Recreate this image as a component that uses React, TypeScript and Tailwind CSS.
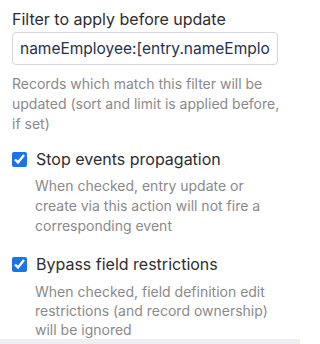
export default function App() {
  const font = { fontFamily: 'Inter, "Noto Sans", sans-serif' };
  return (
    <div className="w-[300px] h-[344px] bg-white flex flex-col overflow-hidden" style={font}>
      <div className="flex-1 px-3 pt-[9px]">
        <label className="block text-[16px] leading-[20px] text-[#2e2e2e]">Filter to apply before update</label>
        <input
          readOnly
          value="nameEmployee:[entry.nameEmployee]"
          className="mt-[3px] h-[33px] w-[266px] rounded-[4px] border border-[#d3d7dd] px-[7px] text-[15.5px] text-[#24324a] outline-none"
          style={font}
        />
        <p className="mt-[9px] text-[14px] leading-[20px] text-[#8a8a8a]">
          Records which match this filter will be updated (sort and limit is applied before, if set)
        </p>

        <div className="mt-[15px] flex items-center gap-[9px]">
          <input type="checkbox" defaultChecked className="w-[15px] h-[15px] accent-[#1a73e8] m-0" />
          <span className="text-[16px] leading-[20px] text-[#2e2e2e]">Stop events propagation</span>
        </div>
        <p className="mt-[7px] pl-[23px] pr-[14px] text-[14px] leading-[20px] text-[#8a8a8a]">
          When checked, entry update or create via this action will not fire a corresponding event
        </p>

        <div className="mt-[18px] flex items-center gap-[9px]">
          <input type="checkbox" defaultChecked className="w-[15px] h-[15px] accent-[#1a73e8] m-0" />
          <span className="text-[16px] leading-[20px] text-[#2e2e2e]">Bypass field restrictions</span>
        </div>
        <p className="mt-[8px] pl-[23px] pr-[14px] text-[14px] leading-[19px] text-[#8a8a8a]">
          When checked, field definition edit restrictions (and record ownership) will be ignored
        </p>
      </div>
      <div className="h-[6px] bg-[#efeff3]" />
    </div>
  );
}
